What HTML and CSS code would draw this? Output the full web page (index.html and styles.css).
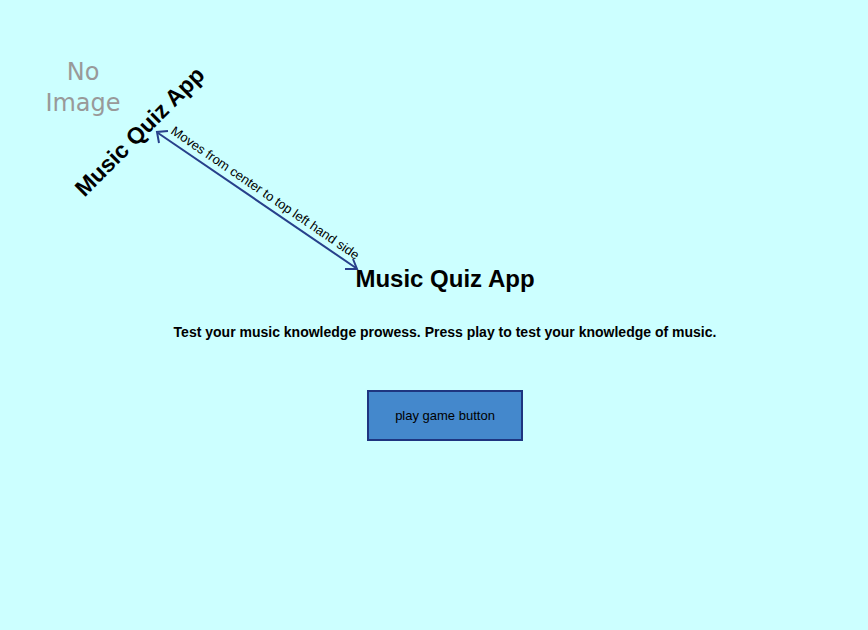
FILE: index.html
```html
<!DOCTYPE html>
<html>
<head>
<meta charset="utf-8">
<link rel="stylesheet" href="styles.css">
</head>
<body>
<div class="canvas">
  <div class="no-image">No<br>Image</div>
  <div class="title-rotated">Music Quiz App</div>
  <svg class="arrow" width="868" height="630" viewBox="0 0 868 630">
    <line x1="158" y1="133" x2="356" y2="268" stroke="#27408b" stroke-width="2"/>
    <polyline points="159,143 157,132 168,131" fill="none" stroke="#27408b" stroke-width="2"/>
    <polyline points="345,269 357,269 353,259" fill="none" stroke="#27408b" stroke-width="2"/>
    <text class="arrow-label" transform="translate(170,133) rotate(34.4)">Moves from center to top left hand side</text>
  </svg>
  <main class="main">
    <h1 class="title">Music Quiz App</h1>
    <p class="intro">Test your music knowledge prowess. Press play to test your knowledge of music.</p>
    <button class="play">play game button</button>
  </main>
</div>
</body>
</html>
```
FILE: styles.css
```css
html, body {
  margin: 0;
  padding: 0;
  background: #ccffff;
}
.canvas {
  position: relative;
  width: 868px;
  height: 630px;
  overflow: hidden;
  font-family: "Liberation Sans", Arial, sans-serif;
}
.main {
  display: flex;
  flex-direction: column;
  align-items: center;
  padding-top: 265px;
  padding-left: 22px;
}
.title {
  margin: 0;
  font-size: 24px;
  line-height: 28px;
  font-weight: bold;
  color: #000;
}
.intro {
  margin: 31px 0 0;
  font-size: 14px;
  line-height: 16px;
  font-weight: bold;
  color: #000;
}
.play {
  margin-top: 50px;
  width: 156px;
  height: 51px;
  background: #4488cc;
  border: 2px solid #1e3580;
  font-family: "Liberation Sans", Arial, sans-serif;
  font-size: 13px;
  color: #000;
  padding: 0;
}
.no-image {
  position: absolute;
  left: 33px;
  top: 57px;
  width: 100px;
  text-align: center;
  font-family: "DejaVu Sans", sans-serif;
  font-size: 24px;
  line-height: 31px;
  color: #999999;
}
.title-rotated {
  position: absolute;
  left: 54px;
  top: 118px;
  width: 170px;
  text-align: center;
  font-size: 23px;
  line-height: 28px;
  font-weight: bold;
  color: #000;
  transform: rotate(-45deg);
  white-space: nowrap;
}
.arrow {
  position: absolute;
  left: 0;
  top: 0;
  pointer-events: none;
}
.arrow-label {
  font-family: "Liberation Sans", Arial, sans-serif;
  font-size: 13px;
  fill: #000;
}
```
